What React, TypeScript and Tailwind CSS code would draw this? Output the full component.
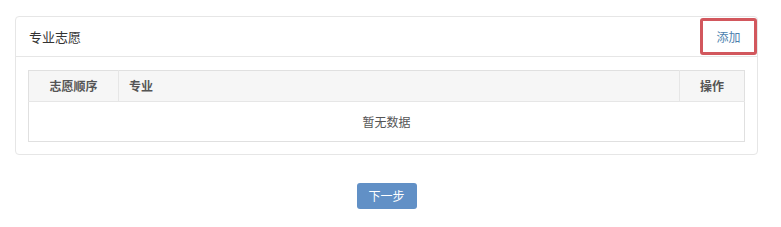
import React from 'react';

const font = { fontFamily: '"Noto Sans CJK SC", "Liberation Sans", sans-serif' };

export default function App(): React.ReactElement {
  return (
    <div className="min-h-[227px] w-[781px] bg-white pt-4 pl-[15px] text-[#333]" style={font}>
      <div className="w-[743px]">
        <div className="rounded-sm border border-[#e6e6e6] bg-white">
          <div className="flex h-10 items-center justify-between border-b border-[#e6e6e6] pl-[13px]">
            <span className="text-[13px] font-normal text-[#333]">专业志愿</span>
            <button className="flex h-[37px] w-[57px] items-center justify-center rounded-[3px] border-[3px] border-[#d2575d] text-[12px] text-[#4d7fae]">
              添加
            </button>
          </div>
          <div className="px-3 pt-[13px] pb-3">
            <table className="w-full border-collapse border border-[#e0e0e0] text-[12px]">
              <thead>
                <tr className="h-[31px] bg-[#f6f6f6]">
                  <th className="w-[90px] border-r border-b border-[#e6e6e6] text-center font-semibold text-[#555]">
                    志愿顺序
                  </th>
                  <th className="border-r border-b border-[#e6e6e6] pl-[10px] text-left font-semibold text-[#555]">
                    专业
                  </th>
                  <th className="w-[65px] border-b border-[#e6e6e6] text-center font-semibold text-[#555]">操作</th>
                </tr>
              </thead>
              <tbody>
                <tr className="h-[40px]">
                  <td colSpan={3} className="text-center text-[#555]">
                    暂无数据
                  </td>
                </tr>
              </tbody>
            </table>
          </div>
        </div>
        <div className="flex justify-center pt-[28px]">
          <button className="h-[26px] w-[60px] rounded-[3px] bg-[#6190c6] text-[12px] text-white">下一步</button>
        </div>
      </div>
    </div>
  );
}
